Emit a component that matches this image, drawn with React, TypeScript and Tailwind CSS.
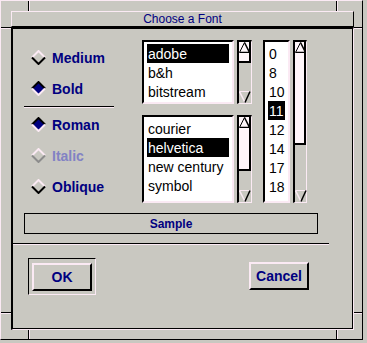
import React from "react";

const LIGHT = "#fbeaf4";

type RadioState = "off" | "on" | "disabled";

function Diamond({ state }: { state: RadioState }) {
  const top = state === "on" ? "#000" : LIGHT;
  const bottom = state === "on" ? LIGHT : state === "disabled" ? "#8c8c8c" : "#000";
  return (
    <svg width="15" height="15" viewBox="0 0 15 15" className="shrink-0">
      {state === "on" && <polygon points="7.5,1.5 13.5,7.5 7.5,13.5 1.5,7.5" fill="#000080" />}
      <polyline points="1,7.5 7.5,1 14,7.5" fill="none" stroke={top} strokeWidth="2" />
      <polyline points="1,7.5 7.5,14 14,7.5" fill="none" stroke={bottom} strokeWidth="2" />
    </svg>
  );
}

function Radio({ label, state }: { label: string; state: RadioState }) {
  return (
    <div className="h-[31px] flex items-center pl-[7px] gap-[6px]">
      <Diamond state={state} />
      <span
        className={
          state === "disabled"
            ? "text-[14px] font-bold text-[#8282c4] leading-none"
            : "text-[14px] font-bold text-[#000080] leading-none"
        }
      >
        {label}
      </span>
    </div>
  );
}

function ListBox({ items, selected, className }: { items: string[]; selected: string; className: string }) {
  return (
    <div
      className={`${className} bg-white border-l-2 border-t-2 border-black border-r-2 border-b-2 border-r-[#fbeaf4] border-b-[#fbeaf4] pt-[2px] px-[3px] overflow-hidden`}
    >
      {items.map((it) => (
        <div
          key={it}
          className={
            it === selected
              ? "h-[19px] flex items-center px-px bg-black text-white text-[14px] leading-none whitespace-nowrap"
              : "h-[19px] flex items-center px-px text-black text-[14px] leading-none whitespace-nowrap"
          }
        >
          {it}
        </div>
      ))}
    </div>
  );
}

function ScrollBar({ className, slider }: { className: string; slider: string }) {
  return (
    <div
      className={`${className} flex flex-col bg-[#c9c8c1] border-l-2 border-t-2 border-black border-r border-b border-r-[#fbeaf4] border-b-[#fbeaf4]`}
    >
      <div className={`${slider} bg-[#fff6fa] border-r-2 border-b-2 border-black`}>
        <svg width="11" height="11" viewBox="0 0 11 11" className="block">
          <polyline points="0.5,10.5 5.5,0.5" fill="none" stroke="#000" strokeWidth="1" />
          <polyline points="5.5,0.5 10.5,10.5 0.5,10.5" fill="none" stroke="#000" strokeWidth="1.5" />
        </svg>
      </div>
      <div className="flex-1" />
      <svg width="12" height="12" viewBox="0 0 12 12" className="block">
        <polyline points="0.5,0.5 11.5,0.5" fill="none" stroke={LIGHT} strokeWidth="1" />
        <polyline points="0.5,0.5 6,11.5" fill="none" stroke={LIGHT} strokeWidth="1.5" />
        <polyline points="6,11.5 11,0.5" fill="none" stroke="#000" strokeWidth="1.5" />
      </svg>
    </div>
  );
}

function Groove({ className }: { className: string }) {
  return <div className={`${className} border-t border-black border-b border-b-[#fbeaf4]`} />;
}

export default function App() {
  return (
    <div className="w-[367px] h-[343px] bg-[#c9c8c1] relative overflow-hidden font-['Liberation_Sans',Arial,sans-serif]">
      {/* window manager frame */}
      <div className="w-[363px] h-[340px] border-l border-t border-[#fbeaf4] border-r border-b border-r-black border-b-black pl-[10px] pt-[10px]">
        <div className="w-[343px] h-[16px] flex items-center justify-center border-l border-t border-[#fbeaf4] border-r border-b border-r-black border-b-black text-[12px] text-[#000080] leading-none">
          Choose a Font
        </div>
        <div className="w-[343px] h-[303px] border-l-2 border-t-2 border-black border-r border-b border-r-[#fbeaf4] border-b-[#fbeaf4]">
          <div className="h-full border-r border-b border-black pt-[11px]">
            {/* top section */}
            <div className="flex h-[163px]">
              <div className="w-[90px] ml-[11px] pt-[2px] flex flex-col">
                <Radio label="Medium" state="off" />
                <Radio label="Bold" state="on" />
                <Groove className="mt-[2px] mb-px" />
                <Radio label="Roman" state="on" />
                <Radio label="Italic" state="disabled" />
                <Radio label="Oblique" state="off" />
              </div>
              <div className="ml-[28px] flex flex-col gap-[11px]">
                <div className="flex gap-[3px]">
                  <ListBox className="w-[92px] h-[64px]" items={["adobe", "b&h", "bitstream"]} selected="adobe" />
                  <ScrollBar className="w-[15px] h-[64px]" slider="h-[21px]" />
                </div>
                <div className="flex gap-[3px]">
                  <ListBox
                    className="w-[92px] h-[88px]"
                    items={["courier", "helvetica", "new century", "symbol"]}
                    selected="helvetica"
                  />
                  <ScrollBar className="w-[15px] h-[88px]" slider="h-[54px]" />
                </div>
              </div>
              <div className="ml-[11px] flex gap-[3px]">
                <ListBox
                  className="w-[27px] h-[163px]"
                  items={["0", "8", "10", "11", "12", "14", "17", "18"]}
                  selected="11"
                />
                <ScrollBar className="w-[14px] h-[163px]" slider="h-[103px]" />
              </div>
            </div>

            {/* sample */}
            <div className="ml-[11px] mt-[10px] w-[294px] h-[21px] border border-black flex items-center justify-center text-[12px] font-bold text-[#000080] leading-none">
              Sample
            </div>

            <Groove className="mt-[9px] w-[316px]" />

            {/* buttons */}
            <div className="flex items-start mt-[13px] ml-[15px]">
              <div className="w-[68px] h-[37px] border-l border-t border-black border-r border-b border-r-[#fbeaf4] border-b-[#fbeaf4] pl-[3px] pt-[4px]">
                <button className="w-[60px] h-[28px] border-l-2 border-t-2 border-[#fbeaf4] border-r-2 border-b-2 border-r-black border-b-black text-[14px] font-bold text-[#000080] leading-none">
                  OK
                </button>
              </div>
              <button className="ml-[153px] mt-[4px] w-[60px] h-[28px] border-l-2 border-t-2 border-[#fbeaf4] border-r-2 border-b-2 border-r-black border-b-black text-[14px] font-bold text-[#000080] leading-none">
                Cancel
              </button>
            </div>
          </div>
        </div>
      </div>

      {/* resize corner marks */}
      <div className="absolute left-[28px] top-px w-[2px] h-[10px] border-l border-black border-r border-r-[#fbeaf4]" />
      <div className="absolute left-[336px] top-px w-[2px] h-[10px] border-l border-black border-r border-r-[#fbeaf4]" />
      <div className="absolute left-[28px] top-[330px] w-[2px] h-[9px] border-l border-black border-r border-r-[#fbeaf4]" />
      <div className="absolute left-[336px] top-[330px] w-[2px] h-[9px] border-l border-black border-r border-r-[#fbeaf4]" />
      <div className="absolute left-px top-[27px] w-[10px] h-[2px] border-t border-black border-b border-b-[#fbeaf4]" />
      <div className="absolute left-[354px] top-[27px] w-[8px] h-[2px] border-t border-black border-b border-b-[#fbeaf4]" />
      <div className="absolute left-px top-[312px] w-[10px] h-[2px] border-t border-black border-b border-b-[#fbeaf4]" />
      <div className="absolute left-[354px] top-[312px] w-[8px] h-[2px] border-t border-black border-b border-b-[#fbeaf4]" />
    </div>
  );
}
